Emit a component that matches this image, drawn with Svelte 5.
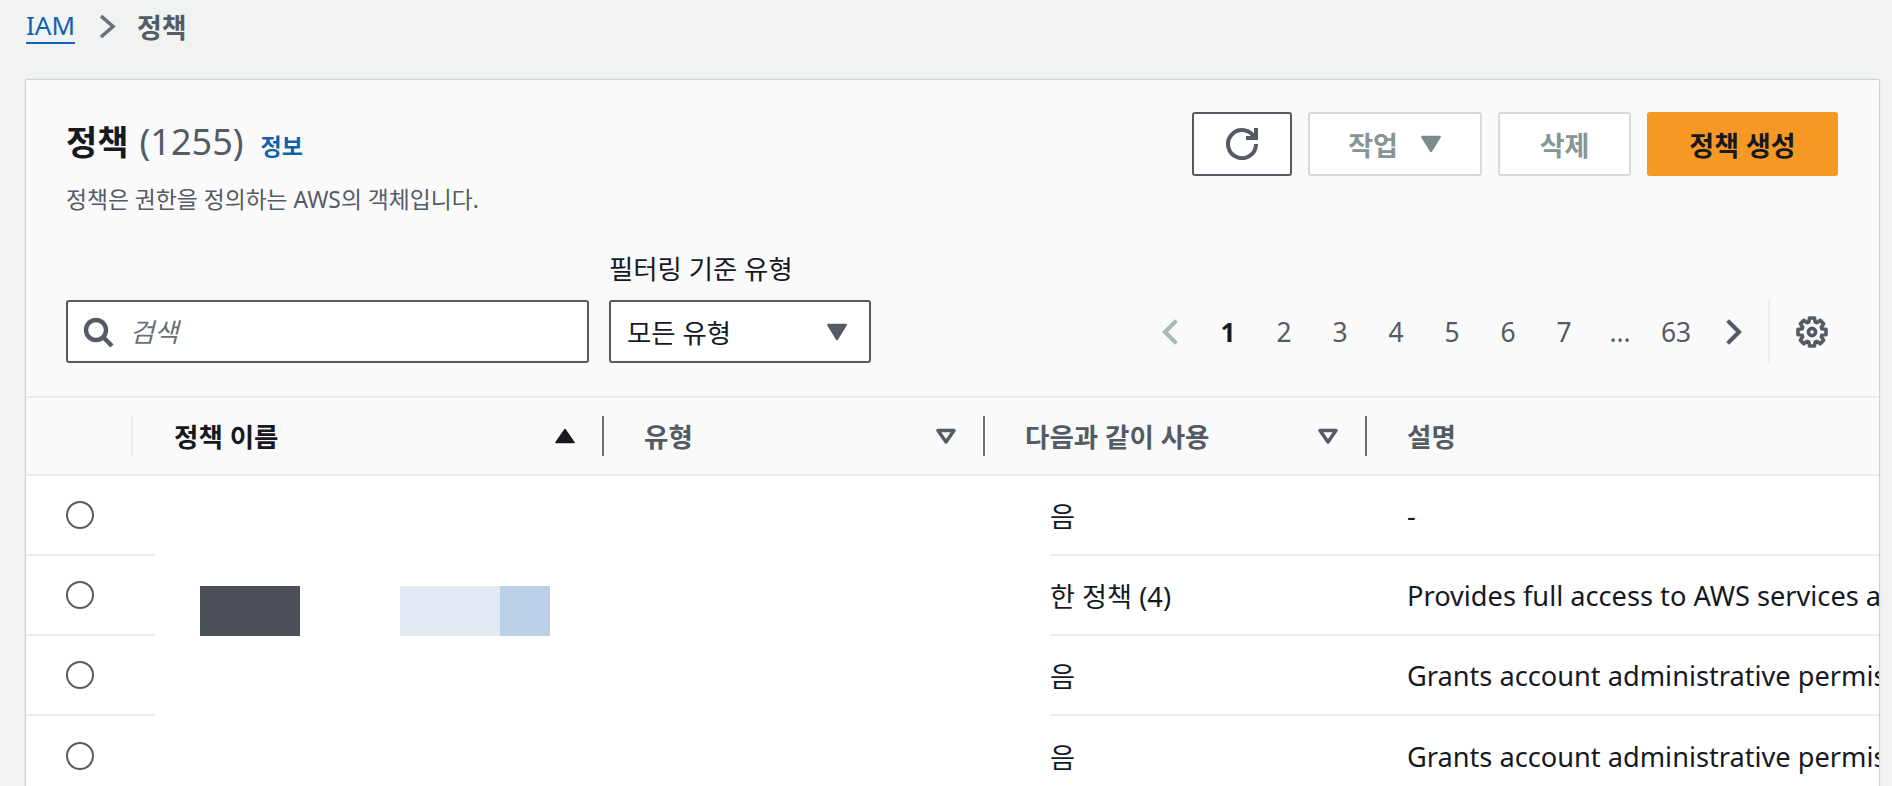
<script>
	const pages = ['1', '2', '3', '4', '5', '6', '7', '...', '63'];

	const rows = [
		{ usage: '음', description: '-' },
		{ usage: '한 정책 (4)', description: 'Provides full access to AWS services a', redacted: true },
		{ usage: '음', description: 'Grants account administrative permis' },
		{ usage: '음', description: 'Grants account administrative permis' }
	];

	const columns = [
		{ label: '', sort: null },
		{ label: '정책 이름', sort: 'asc' },
		{ label: '유형', sort: 'none' },
		{ label: '다음과 같이 사용', sort: 'none' },
		{ label: '설명', sort: null }
	];

	// 8 lobes around the settings gear, in a 16x16 box
	function gearPath() {
		const cx = 8;
		const cy = 8;
		const points = [];
		for (let i = 0; i < 8; i++) {
			const a = (i * Math.PI) / 4 - Math.PI / 2;
			for (const [r, off] of [[4.9, -0.32], [6.7, -0.17], [6.7, 0.17], [4.9, 0.32]]) {
				points.push([cx + r * Math.cos(a + off), cy + r * Math.sin(a + off)]);
			}
		}
		return 'M' + points.map((p) => p[0].toFixed(2) + ' ' + p[1].toFixed(2)).join('L') + 'Z';
	}
</script>

<div class="page">
	<nav class="crumbs">
		<a class="crumb-link" href="#iam">IAM</a>
		<svg class="crumb-sep" viewBox="0 0 18 25"><path d="M3 2 15 12.5 3 23" /></svg>
		<span class="crumb-current">정책</span>
	</nav>

	<section class="card">
		<header class="card-head">
			<div class="head-top">
				<div class="head-text">
					<h1 class="title">정책<span class="count">(1255)</span><a class="info" href="#info">정보</a></h1>
					<p class="subtitle">정책은 권한을 정의하는 AWS의 객체입니다.</p>
				</div>
				<div class="actions">
					<button class="btn refresh" aria-label="새로 고침">
						<svg class="refresh-icon" viewBox="0 0 16 16">
							<path d="M10 5h5V0" />
							<path d="M15 8a7 7 0 1 1-.7-3" />
						</svg>
					</button>
					<button class="btn disabled action-btn">
						작업
						<svg class="caret action-caret" viewBox="0 0 20 16"><path d="M2 1.5h16L10 14.5z" /></svg>
					</button>
					<button class="btn disabled delete-btn">삭제</button>
					<button class="btn primary">정책 생성</button>
				</div>
			</div>

			<div class="filters">
				<label class="search">
					<svg class="search-icon" viewBox="0 0 16 16">
						<circle cx="7" cy="7" r="5" />
						<path d="m15 15-4.5-4.5" />
					</svg>
					<input type="text" placeholder="검색" />
				</label>
				<div class="type-filter">
					<span class="filter-label">필터링 기준 유형</span>
					<div class="select">
						<span>모든 유형</span>
						<svg class="caret select-caret" viewBox="0 0 20 16"><path d="M2 1.5h16L10 14.5z" /></svg>
					</div>
				</div>
				<div class="pager">
					<svg class="pager-arrow off" viewBox="0 0 16 16"><path d="M10.5 1.5 4 8l6.5 6.5" /></svg>
					{#each pages as page, i}
						<span class="page-num" class:current={i === 0}>{page}</span>
					{/each}
					<svg class="pager-arrow" viewBox="0 0 16 16"><path d="M5.5 1.5 12 8l-6.5 6.5" /></svg>
				</div>
				<div class="settings">
					<svg class="gear" viewBox="0 0 16 16">
						<path d={gearPath()} />
						<circle cx="8" cy="8" r="1.7" />
					</svg>
				</div>
			</div>
		</header>

		<div class="table-head">
			{#each columns as col, i}
				<div class="th" class:active={col.sort === 'asc'} class:first={i === 0}>
					<span>{col.label}</span>
					{#if col.sort === 'asc'}
						<svg class="sort" viewBox="0 0 22 16"><path class="solid" d="M11 1.5 20 14.5H2z" /></svg>
					{:else if col.sort === 'none'}
						<svg class="sort" viewBox="0 0 22 16"><path d="M3 2.5h16L11 14z" /></svg>
					{/if}
				</div>
			{/each}
		</div>

		{#each rows as row}
			<div class="row">
				<div class="cell radio-cell"><span class="radio"></span></div>
				<div class="masked">
					{#if row.redacted}
						<span class="blot dark"></span>
						<span class="blot light"></span>
						<span class="blot blue"></span>
					{/if}
				</div>
				<div class="cell text-cell">{row.usage}</div>
				<div class="cell text-cell">{row.description}</div>
			</div>
		{/each}
	</section>
</div>

<style>
	:global(body) {
		background: #f1f3f3;
		overflow: hidden;
	}

	.page {
		height: 786px;
		overflow: hidden;
		padding: 0 13px 0 26px;
		box-sizing: border-box;
		font-family: "Noto Sans", "Noto Sans CJK KR", sans-serif;
		font-size: 26px;
		color: #16191f;
	}

	.crumbs {
		display: flex;
		align-items: center;
		height: 52px;
		margin-bottom: 28px;
	}

	.crumb-link {
		color: #0f62ae;
		text-decoration: none;
		border-bottom: 2px solid #1166bb;
		line-height: 34px;
	}

	.crumb-sep {
		width: 18px;
		height: 25px;
		margin: 0 21px 0 23px;
		fill: none;
		stroke: #687078;
		stroke-width: 3.6;
	}

	.crumb-current {
		color: #545b64;
		font-size: 27px;
		font-weight: 700;
	}

	.card {
		background: #fff;
		box-shadow: 0 0 2px rgba(0, 28, 36, 0.45);
		height: 720px;
	}

	.card-head {
		background: #fafafa;
		box-sizing: border-box;
		height: 318px;
		padding: 32px 41px 0 40px;
		border-bottom: 2px solid #eaeded;
	}

	.head-top {
		display: flex;
		justify-content: space-between;
		height: 99px;
	}

	.title {
		display: flex;
		align-items: baseline;
		margin: 0;
		height: 60px;
		font-size: 34px;
		font-weight: 700;
		line-height: 60px;
	}

	.count {
		color: #545b64;
		font-size: 36px;
		font-weight: 400;
		margin-left: 11px;
	}

	.info {
		font-size: 23px;
		font-weight: 700;
		color: #0f62ae;
		text-decoration: none;
		margin-left: 17px;
	}

	.subtitle {
		margin: 13px 0 0;
		font-size: 22.8px;
		line-height: 30px;
		color: #545b64;
	}

	.actions {
		display: flex;
		gap: 16px;
	}

	.btn {
		display: flex;
		align-items: center;
		justify-content: center;
		height: 64px;
		box-sizing: border-box;
		border: 2px solid #545b64;
		border-radius: 3px;
		background: #fff;
		font: inherit;
		font-size: 27px;
		font-weight: 700;
		padding: 0;
	}

	.refresh {
		width: 100px;
	}

	.refresh-icon {
		width: 32px;
		height: 32px;
		fill: none;
		stroke: #545b64;
		stroke-width: 2;
	}

	.disabled {
		border-color: #d5dbdb;
		color: #879596;
	}

	.action-btn {
		width: 174px;
		gap: 22px;
	}

	.delete-btn {
		width: 133px;
	}

	.primary {
		width: 191px;
		background: #f89824;
		border-color: #f89824;
		color: #16191f;
	}

	.caret {
		width: 22px;
		height: 18px;
	}

	.caret path {
		stroke-linejoin: round;
		stroke-width: 2;
	}

	.action-caret path {
		fill: #7d8b8b;
		stroke: #7d8b8b;
	}

	.select-caret path {
		fill: #545b64;
		stroke: #545b64;
	}

	.filters {
		display: flex;
		align-items: flex-end;
		margin-top: 41px;
		font-size: 26.4px;
	}

	.search {
		display: flex;
		align-items: center;
		width: 523px;
		height: 63px;
		box-sizing: border-box;
		border: 2px solid #545b64;
		border-radius: 3px;
		background: #fff;
		padding: 0 14px;
		gap: 16px;
	}

	.search-icon {
		width: 32px;
		height: 32px;
		flex-shrink: 0;
		fill: none;
		stroke: #545b64;
		stroke-width: 2.2;
	}

	.search input {
		flex: 1;
		min-width: 0;
		border: 0;
		outline: 0;
		padding: 0;
		font: inherit;
		font-style: italic;
		background: transparent;
	}

	.search input::placeholder {
		color: #687078;
		opacity: 1;
	}

	.type-filter {
		display: flex;
		flex-direction: column;
		margin-left: 20px;
	}

	.filter-label {
		line-height: 34px;
		margin-bottom: 14px;
		color: #16191f;
	}

	.select {
		display: flex;
		align-items: center;
		justify-content: space-between;
		width: 262px;
		height: 63px;
		box-sizing: border-box;
		border: 2px solid #545b64;
		border-radius: 3px;
		background: #fff;
		padding: 0 21px 0 16px;
	}

	.pager {
		display: flex;
		align-items: center;
		height: 63px;
		margin-left: auto;
	}

	.pager > * {
		width: 56px;
		text-align: center;
	}

	.page-num {
		color: #545b64;
	}

	.page-num.current {
		color: #16191f;
		font-weight: 700;
	}

	.pager-arrow {
		height: 28px;
		fill: none;
		stroke: #545b64;
		stroke-width: 2.4;
	}

	.pager-arrow.off {
		stroke: #aab7b8;
	}

	.settings {
		display: flex;
		align-items: center;
		justify-content: flex-end;
		height: 63px;
		width: 70px;
		box-sizing: border-box;
		border-left: 2px solid #eaeded;
		padding-right: 9px;
		margin-left: 8px;
	}

	.gear {
		width: 34px;
		height: 34px;
		fill: none;
		stroke: #545b64;
		stroke-width: 1.7;
		stroke-linejoin: round;
	}

	.table-head {
		display: grid;
		grid-template-columns: 107px 471px 381px 382px 1fr;
		height: 76px;
		background: #fafafa;
		border-bottom: 2px solid #eaeded;
		align-items: center;
		color: #545b64;
	}

	.th {
		display: flex;
		align-items: center;
		justify-content: space-between;
		box-sizing: border-box;
		height: 40px;
		padding: 0 26px 0 40px;
		border-right: 2px solid #687078;
		font-size: 26.5px;
		font-weight: 700;
	}

	.th:first-child + .th {
		padding-left: 41px;
	}

	.th span {
		position: relative;
		top: -1px;
	}

	.th:last-child {
		border-right: 0;
	}

	.th.first {
		border-right-color: #eaeded;
	}

	.th.active {
		color: #16191f;
	}

	.sort {
		width: 22px;
		height: 16px;
		fill: none;
		stroke: #545b64;
		stroke-width: 3.4;
		stroke-linejoin: round;
	}

	.sort .solid {
		fill: #16191f;
		stroke: #16191f;
		stroke-width: 1.5;
	}

	.row {
		display: grid;
		grid-template-columns: 129px 895px 357px 1fr;
		height: 80px;
	}

	.cell {
		display: flex;
		align-items: center;
		border-bottom: 2px solid #eaeded;
		min-width: 0;
		overflow: hidden;
		white-space: nowrap;
	}

	.text-cell {
		font-size: 27.2px;
	}

	.row:last-child .cell {
		border-bottom: 0;
	}

	.radio-cell {
		padding-left: 40px;
	}

	.radio {
		width: 28px;
		height: 28px;
		box-sizing: border-box;
		border: 2px solid #545b64;
		border-radius: 50%;
	}

	.masked {
		display: flex;
		align-items: flex-start;
		padding: 30px 0 0 45px;
	}

	.blot {
		display: block;
		height: 50px;
		width: 100px;
	}

	.dark {
		background: #4c5058;
		margin-right: 100px;
	}

	.light {
		background: #e2e9f3;
	}

	.blue {
		background: #bad0e6;
		width: 50px;
	}
</style>
